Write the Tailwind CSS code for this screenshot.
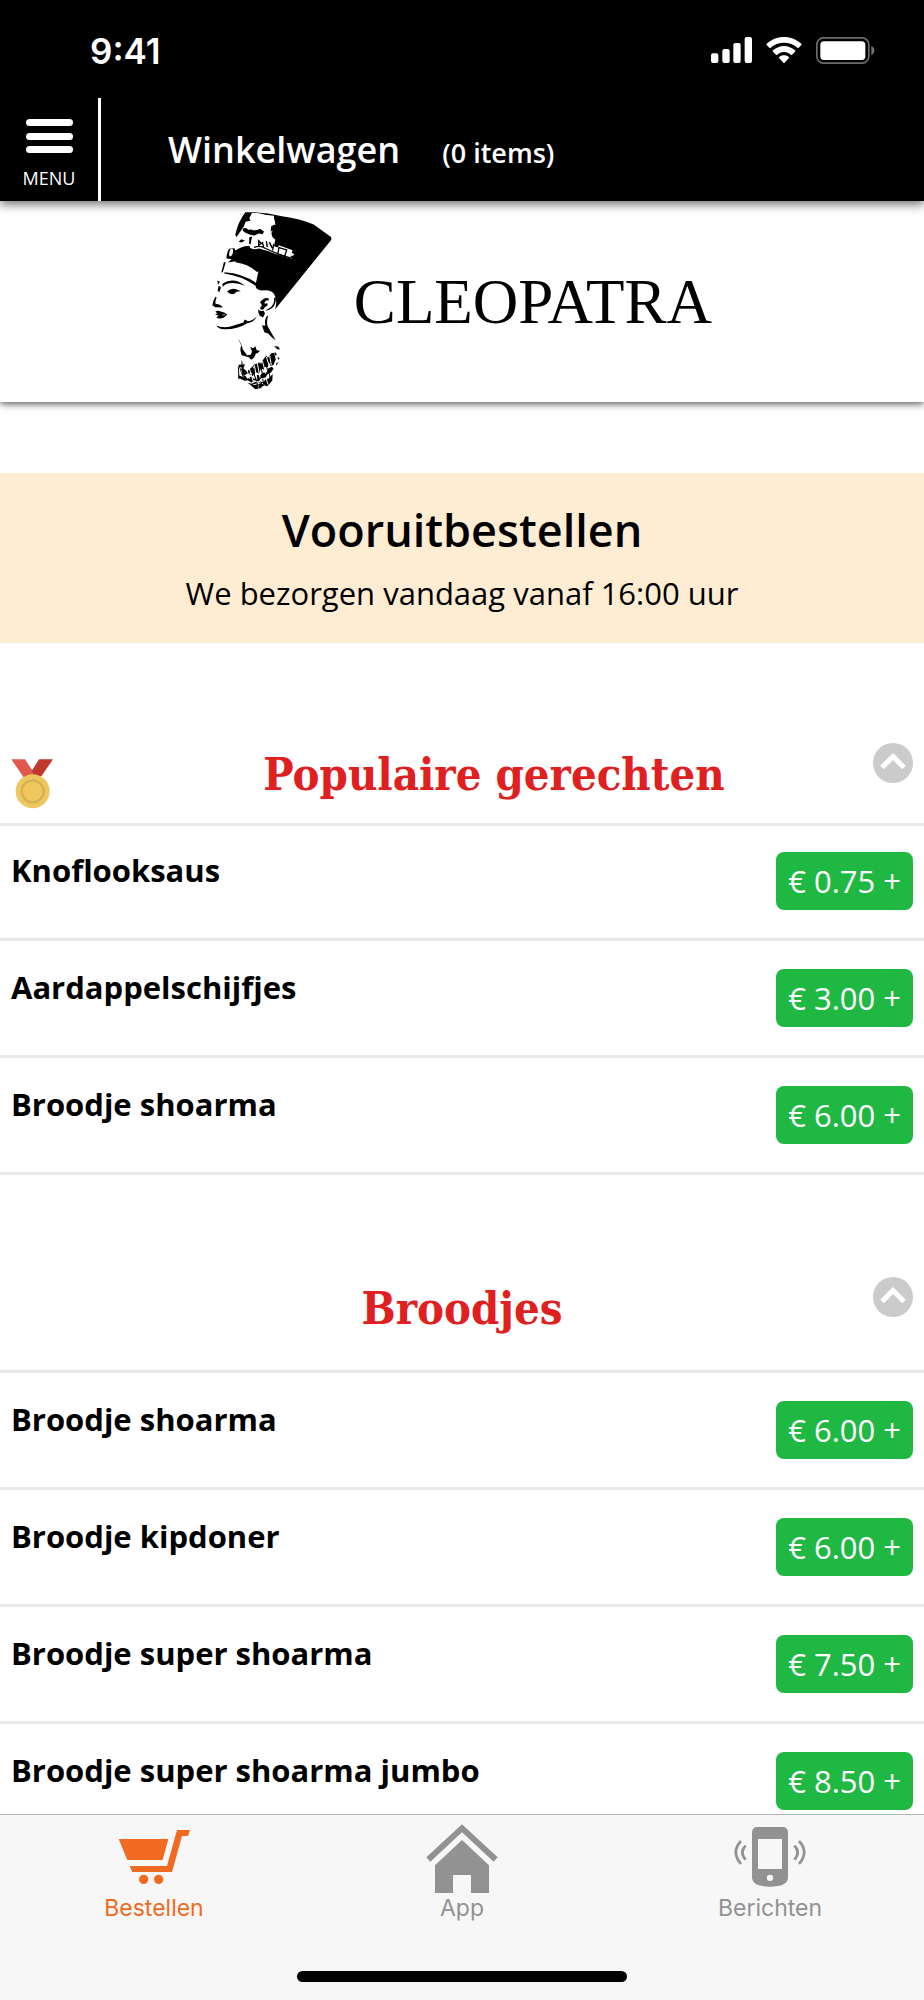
<!DOCTYPE html>
<html lang="nl">
<head>
<meta charset="utf-8">
<meta name="viewport" content="width=device-width, initial-scale=1">
<title>Cleopatra</title>
<script src="https://cdn.jsdelivr.net/npm/@tailwindcss/browser@4"></script>
</head>
<body class="flex h-screen flex-col overflow-hidden bg-white font-['Open_Sans','Noto_Sans',sans-serif] text-black">

<header class="relative z-20 bg-black text-white shadow-[0_3px_10px_rgba(0,0,0,0.6)]">
  <div class="flex h-[98px] items-center justify-between pr-12 pl-[90px]">
    <time class="pt-1 font-['Inter',sans-serif] text-[35px] leading-10 font-semibold">9:41</time>
    <div class="flex items-center gap-3.5 pt-0.5">
      <svg class="h-[26px] w-[41px]" viewBox="0 0 123 78" fill="#fff" aria-hidden="true"><rect y="49" width="22" height="29" rx="6"/><rect x="34" y="36" width="22" height="42" rx="6"/><rect x="67" y="18" width="22" height="60" rx="6"/><rect x="101" width="22" height="78" rx="6"/></svg>
      <svg class="h-[26px] w-9" viewBox="917 111 106 78" fill="#fff" aria-hidden="true"><path d="M970 111c20 0 38 8 52 20q2 2 0 4l-8 8q-2 2-4 0c-11-10-25-15-40-15s-29 5-40 15q-2 2-4 0l-8-8q-2-2 0-4c14-12 32-20 52-20zM970 138c12 0 24 5 33 13q2 2 0 4l-9 9q-2 2-4 0c-6-5-12-8-20-8s-14 3-20 8q-2 2-4 0l-9-9q-2-2 0-4c9-8 21-13 33-13zM970 166c6 0 11 2 14 5q2 2 0 4l-12 13q-2 2-4 0l-12-13q-2-2 0-4c3-3 8-5 14-5z"/></svg>
      <svg class="h-[27px] w-[60px]" viewBox="0 0 180 81" aria-hidden="true"><rect x="2.500" y="2.500" width="156" height="76" rx="20" fill="none" stroke="#6b6b6b" stroke-width="5"/><rect x="13" y="13" width="135" height="56" rx="11" fill="#fff"/><path d="M166 27q9 4 9 13.500t-9 13.500z" fill="#777"/></svg>
    </div>
  </div>
  <div class="flex h-[103px]">
    <button type="button" class="flex w-[101px] flex-col items-center border-r-3 border-white pt-5">
      <svg class="h-9 w-12" viewBox="0 0 48 36" fill="#fff" aria-hidden="true"><rect x="1" y="1" width="47" height="7" rx="3.500"/><rect x="1" y="15" width="47" height="7" rx="3.500"/><rect x="1" y="28" width="47" height="7" rx="3.500"/></svg>
      <span class="pt-3 text-lg leading-6">MENU</span>
    </button>
    <a href="#winkelwagen" class="flex items-baseline gap-[42px] pt-[26px] pl-[67px] font-semibold">
      <span class="text-4xl leading-[52px]">Winkelwagen</span>
      <span class="text-[27px] leading-9">(0 items)</span>
    </a>
  </div>
</header>

<div class="relative z-10 flex h-[201px] shrink-0 items-center justify-center gap-[22px] bg-white shadow-[0_2px_7px_rgba(0,0,0,0.65)]">
  <svg class="h-[183px] w-[120px]" viewBox="60 50 360 548" aria-hidden="true">
    <path d="M160 56Q215 54 270 68Q325 75 365 93L416 130Q420 134 417 140L249 348q8-26-1-43-7-17-38-14-22-2-19-19l8-37q-24-25-68-32l-23 4q22-18 20-35 28-18 45-14 14-21 35-9l86 37q9 4 13-4l-8-4 3-8-42-15-2 8-48-17-3-10q9-10 4-13l-16 2q-22 14-37-1 25-5 50 0l24-12q13-22 14-28-4-18-45-25z"/>
    <path d="M176 60l70 7 1 10q6 6 4 16l-10 2 3 12-6 12 4 13 8 6-4 20-66-20-12-2-20-8 6-18q-4-10 12-12l8-22z" fill="#fff"/>
    <path d="M160 56l20 2-8 16 3 8-14 3-6 15-22 31-3-8q8-38 30-67zM246 68l22 1-4 25-14-2zM153 105q10-4 16 4l9-1q12 6 26-2l12 8-4 8-12-2-13 6q-26-4-35-15zM238 97l10 3-2 9-10 6zM172 131l8-2-3 24-6-2zM140 145l8-8 11 5-11 5z"/>
    <path d="M180 134q20-9 28 2l12 5 3 15 17 5-2-14 12 15 6-1 36 18 7 17-39-11q-28-13-59-20-18 6-28-3z" fill="#fff"/>
    <path d="M186 162q18-8 35 3 35 17 76 29M200 142l8 8-8 6zM223 143l3 18M232 146l9 18M245 151l-3 20M261 162l-4 21 21 6 6-20zM211 145l4 16" fill="none" stroke="#000" stroke-width="4"/>
    <path d="M111 166q-9 16-7 29l18 2q11-17 6-33z"/><path d="M116 166q-8 14-3 23 12-2 10-22z" fill="#fff"/>
    <path d="M96 205l-8 31 4 1 9-29M131 202q30-2 68 29l-4 5q-25-25-65-30zM97 236q56 3 98 34l-4 7q-42-30-94-37z"/>
    <path d="M91 271q34-22 68 6-32-14-58-5l-9 8zM76 261l8 4-6 9zM80 276l7 6-5 14-5-4zM105 294q15-14 31-5l11 4-14 2q-5 10-19 6z"/>
    <path d="M70 310q-8 15-9 25l9 6 22 1q-5-9-21-11-3-5 3-19zM70 354q9-4 16 0 11 2 20 9l-10 9q-15 6-23-1l7-4-11-5 7-2zM73 396q13 7 40 4l41-13 4-9 10 5q15-1 26-14-8 18-28 20-29 18-66 18-21 1-27-11z"/>
    <path d="M91 364h9" stroke="#fff" stroke-width="2"/>
    <path d="M204 327q11-17 25-13l2 8q-6-5-14 5l2 4q11-5 7 5-9 4-12 12-9 3-10-5 7-4 5-10zM246 313q4 22-17 33l-9 5 9-1q23-7 23-37zM199 347q5 8 16 5l4 8-6 12-10-5-4-11zM224 368l4-1q-7 27 3 39l20 34q-16-10-21-19l-13-5-7-21 10 2q-3-18 4-29z"/>
    <path d="M138 435q12 18 14 32l14 19 5-2q6 3 9-11l-6-13q10 7 12 2l4-4 4 12 10 2q-6 8-12 8l-6 12-8 7-8-8-21-6q-7-18-1-28zM149 499l3 12-4 5zM246 458l13 1 5 9-8-1zM248 475l7 7-5 5zM257 489l6 7-5 3zM252 510l9-5-9 11z"/>
    <path d="M139 514l20-2-5 12 11 10 14-13 8 5-4-11 18-8 5 9 5-14 12-16 5 7 10-14 9-1 4 20-6 16-10 4-1-11-8 15-8-2-2 9-9-4-6 16-8-5-12 12-13-8-17 8zM139 545l12 5 8-5 7 11 12-8 9 9 7-13 11 2 6-8 13-1 3-11 12-6 6 5-8 12-11 6-5 9-14 2-7 10-14-4-7 8-12-8-9 2-19-9zM167 568l13 3 9-6 8 4 8-5 9 2 7-9 10-2 11-14-1 20-15 17-12-1-10 8-14 2-12-10z"/>
    <path d="M146 520l9 35M162 515l10 41M172 525l13 43M187 515l8 43M196 508l8 45M211 501l10 39M223 490l9 28M233 487l5 29M160 546l20-7M184 574l22-6M210 569l12 10M196 564l4 23M222 553l6 20" stroke="#fff" stroke-width="3"/>
    <path d="M139 519l2 38M149 526l6 33M181 519l8 33M204 507l7 34M219 497l7 31M194 564l5 20M212 555l4 22M232 540l3 20" stroke="#000" stroke-width="3"/>
  </svg>
  <h1 class="font-['Liberation_Serif',serif] text-[63px] leading-[72px]">CLEOPATRA</h1>
</div>

<main class="min-h-0 flex-1 overflow-hidden pt-[71px]">
  <section class="bg-[#ffedd3] pt-[27px] pb-7 text-center">
    <h2 class="text-[45px] leading-[60px] font-semibold">Vooruitbestellen</h2>
    <p class="pt-[11px] text-[31px] leading-[44px]">We bezorgen vandaag vanaf 16:00 uur</p>
  </section>

  <section class="pt-[100px]">
    <div class="grid grid-cols-[104px_1fr_40px] items-start border-b-3 border-[#e9e9e9] px-[11px] pb-3.5">
      <svg class="mt-4 h-[50px] w-[43px]" viewBox="34 116 129 150" aria-hidden="true"><path d="M35 117h41l34 51-29 16z" fill="#e2574c"/><path d="M118 117h42l-35 51-16 3-13-19z" fill="#bf392c"/><circle cx="99" cy="213" r="51" fill="#efc75e"/><circle cx="99" cy="213" r="33" fill="none" stroke="#d4b154" stroke-width="7"/></svg>
      <h2 class="pt-0.5 text-center font-['DejaVu_Serif_Condensed','DejaVu_Serif',serif] text-[45px] leading-[60px] font-bold whitespace-nowrap text-[#e02020]">Populaire gerechten</h2>
      <button type="button" aria-label="Populaire gerechten inklappen"><svg class="size-10" viewBox="0 0 40 40" aria-hidden="true"><circle cx="20" cy="20" r="20" fill="#cbcbcb"/><path d="M9 24.500L20 13.500l11 11" fill="none" stroke="#fff" stroke-width="5"/></svg></button>
    </div>
    <ul class="-mt-0.5">
      <li class="flex h-[117px] items-start justify-between border-b-3 border-[#e9e9e9] px-[11px]"><h3 class="pt-6 text-[31px] leading-[44px] font-bold">Knoflooksaus</h3><button type="button" class="mt-7 rounded-lg bg-[#1fb843] px-3 py-[7px] text-[31px] leading-[44px] text-white">€ 0.75 +</button></li>
      <li class="flex h-[117px] items-start justify-between border-b-3 border-[#e9e9e9] px-[11px]"><h3 class="pt-6 text-[31px] leading-[44px] font-bold">Aardappelschijfjes</h3><button type="button" class="mt-7 rounded-lg bg-[#1fb843] px-3 py-[7px] text-[31px] leading-[44px] text-white">€ 3.00 +</button></li>
      <li class="flex h-[117px] items-start justify-between border-b-3 border-[#e9e9e9] px-[11px]"><h3 class="pt-6 text-[31px] leading-[44px] font-bold">Broodje shoarma</h3><button type="button" class="mt-7 rounded-lg bg-[#1fb843] px-3 py-[7px] text-[31px] leading-[44px] text-white">€ 6.00 +</button></li>
    </ul>
  </section>

  <section class="pt-[102px]">
    <div class="grid grid-cols-[40px_1fr_40px] items-start border-b-3 border-[#e9e9e9] px-[11px] pb-[31px]">
      <h2 class="col-start-2 pt-0.5 text-center font-['DejaVu_Serif_Condensed','DejaVu_Serif',serif] text-[45px] leading-[60px] font-bold text-[#e02020]">Broodjes</h2>
      <button type="button" aria-label="Broodjes inklappen"><svg class="size-10" viewBox="0 0 40 40" aria-hidden="true"><circle cx="20" cy="20" r="20" fill="#cbcbcb"/><path d="M9 24.500L20 13.500l11 11" fill="none" stroke="#fff" stroke-width="5"/></svg></button>
    </div>
    <ul>
      <li class="flex h-[117px] items-start justify-between border-b-3 border-[#e9e9e9] px-[11px]"><h3 class="pt-6 text-[31px] leading-[44px] font-bold">Broodje shoarma</h3><button type="button" class="mt-7 rounded-lg bg-[#1fb843] px-3 py-[7px] text-[31px] leading-[44px] text-white">€ 6.00 +</button></li>
      <li class="flex h-[117px] items-start justify-between border-b-3 border-[#e9e9e9] px-[11px]"><h3 class="pt-6 text-[31px] leading-[44px] font-bold">Broodje kipdoner</h3><button type="button" class="mt-7 rounded-lg bg-[#1fb843] px-3 py-[7px] text-[31px] leading-[44px] text-white">€ 6.00 +</button></li>
      <li class="flex h-[117px] items-start justify-between border-b-3 border-[#e9e9e9] px-[11px]"><h3 class="pt-6 text-[31px] leading-[44px] font-bold">Broodje super shoarma</h3><button type="button" class="mt-7 rounded-lg bg-[#1fb843] px-3 py-[7px] text-[31px] leading-[44px] text-white">€ 7.50 +</button></li>
      <li class="flex h-[117px] items-start justify-between border-b-3 border-[#e9e9e9] px-[11px]"><h3 class="pt-6 text-[31px] leading-[44px] font-bold">Broodje super shoarma jumbo</h3><button type="button" class="mt-7 rounded-lg bg-[#1fb843] px-3 py-[7px] text-[31px] leading-[44px] text-white">€ 8.50 +</button></li>
    </ul>
  </section>
</main>

<footer class="relative z-10 flex shrink-0 flex-col items-center justify-between border-t border-[#b5b5b5] bg-[#f7f7f7] pt-[9px] pb-[18px]">
  <nav class="grid w-full grid-cols-3 font-['Inter',sans-serif] text-[23px] leading-7 text-[#929292]">
    <a href="#bestellen" aria-current="page" class="flex flex-col items-center text-[#f16a22]">
      <svg class="h-[70px] w-[72px]" viewBox="354 252 216 210" fill="currentColor" aria-hidden="true"><path d="M356 297h149l-17 63H382zM531 270h39l-6 18h-18l-30 108H397l-8-18h112z"/><circle cx="431" cy="418" r="14"/><circle cx="476" cy="418" r="14"/></svg>
      <span>Bestellen</span>
    </a>
    <a href="#app" class="flex flex-col items-center">
      <svg class="h-[70px] w-[72px]" viewBox="1278 252 216 210" fill="currentColor" aria-hidden="true"><path d="M1386 253l107 99-12 13-95-88-95 88-12-13zM1386 300l81 76v83h-54v-54h-54v54h-54v-83z"/></svg>
      <span>App</span>
    </a>
    <a href="#berichten" class="flex flex-col items-center">
      <svg class="h-[70px] w-[72px]" viewBox="813 252 216 210" fill="currentColor" aria-hidden="true"><path fill-rule="evenodd" d="M884 261h74q17 0 17 17v137q-3 25-54 25t-54-25V278q0-17 17-17zM885 297v90h72v-90zM921 404a9 9 0 1 0 0 19a9 9 0 1 0 0-19z"/><path d="M834 303q-31 33 0 69M848 317q-20 20 0 42M1008 303q31 33 0 69M994 317q20 20 0 42" fill="none" stroke="currentColor" stroke-width="8"/></svg>
      <span>Berichten</span>
    </a>
  </nav>
  <div class="mt-[49px] h-[11px] w-[330px] rounded-full bg-black"></div>
</footer>
</body>
</html>
